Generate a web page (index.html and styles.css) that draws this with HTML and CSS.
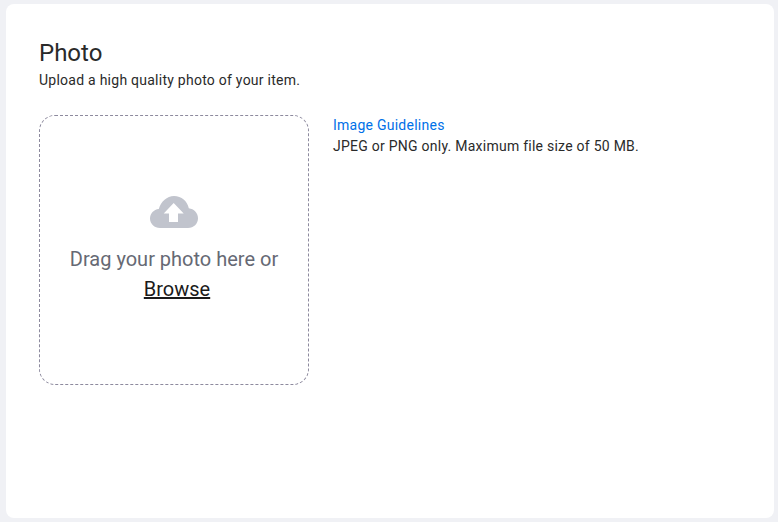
FILE: index.html
```html
<!DOCTYPE html>
<html lang="en">
<head>
<meta charset="utf-8">
<title>Photo</title>
<link rel="stylesheet" href="styles.css">
</head>
<body>
<main class="card">
  <h1 class="title">Photo</h1>
  <p class="subtitle">Upload a high quality photo of your item.</p>
  <div class="row">
    <div class="dropzone">
      <svg class="cloud" width="48" height="32" viewBox="0 0 48 32" aria-hidden="true">
        <path fill="#c1c4cd" d="M10 32C4.500 32 0 27.800 0 22.500c0-5 3.800-9 8.800-9.500C11 5.500 17 0 24 0c7.500 0 13.500 5.300 14.800 12.300C44 13 48 17 48 22.300 48 27.800 43.800 32 38 32z"/>
        <path fill="#fff" d="M23.700 7l10 10.500H28V26h-9v-8.500h-5.300z"/>
      </svg>
      <p class="drag">Drag your photo here or</p>
      <a class="browse" href="#">Browse</a>
    </div>
    <div class="guidelines">
      <a class="guide-link" href="#">Image Guidelines</a>
      <p class="guide-text">JPEG or PNG only. Maximum file size of 50 MB.</p>
    </div>
  </div>
</main>
</body>
</html>
```
FILE: styles.css
```css
* { box-sizing: border-box; }
html, body { height: 100%; }
body {
  margin: 0;
  padding: 4px 4px 4px 6px;
  background: #f0f1f5;
  font-family: Roboto, "Liberation Sans", sans-serif;
  color: #2a2a2a;
  overflow: hidden;
}
.card {
  height: 514px;
  background: #fff;
  border-radius: 8px;
  padding: 34px 33px;
}
.title {
  margin: 0;
  font-size: 24px;
  line-height: 30px;
  font-weight: 400;
}
.subtitle {
  margin: 3px 0 0;
  font-size: 14px;
  line-height: 18px;
  letter-spacing: 0.25px;
}
.row {
  display: flex;
  gap: 24px;
  margin-top: 26px;
}
.dropzone {
  width: 270px;
  height: 270px;
  flex: none;
  display: flex;
  flex-direction: column;
  align-items: center;
  padding-top: 80px;
  border: 1px dashed #8d8a9e;
  border-radius: 16px;
}
.cloud { display: block; }
.drag {
  margin: 16px 0 0;
  font-size: 20px;
  line-height: 30px;
  color: #666974;
}
.browse {
  padding-left: 6px;
  font-size: 20px;
  line-height: 30px;
  color: #1a1a1a;
  text-decoration: underline;
}
.guidelines {
  font-size: 14px;
  line-height: 20px;
  letter-spacing: 0.25px;
}
.guide-link {
  display: block;
  color: #0070e8;
  text-decoration: none;
}
.guide-text { margin: 1px 0 0; }
```
